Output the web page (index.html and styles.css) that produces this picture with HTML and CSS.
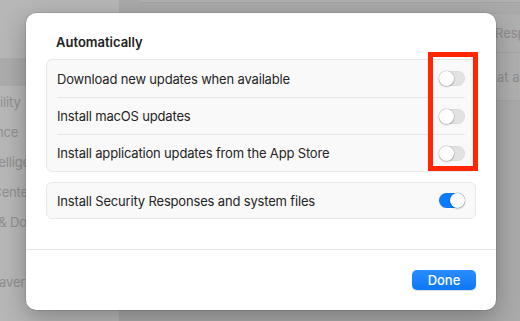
FILE: index.html
```html
<!DOCTYPE html>
<html>
  <head>
    <link rel="stylesheet" href="styles.css">
  </head>
  <body>
    <div class="window">
      <aside class="sidebar">
        <div class="side-item selected">General</div>
        <div class="side-item">Accessibility</div>
        <div class="side-item">Appearance</div>
        <div class="side-item">Apple Intelligence &amp; Siri</div>
        <div class="side-item">Control Center</div>
        <div class="side-item">Desktop &amp; Dock</div>
        <div class="side-item">Displays</div>
        <div class="side-item">Screen Saver</div>
      </aside>
      <main class="content">
        <div class="pane-top"></div>
        <div class="pane-group">
          <div class="pane-row"><span class="pane-text">Responses and system files</span></div>
          <div class="pane-row tall"><span class="pane-text">at accompanied the software</span></div>
        </div>
      </main>
    </div>

    <div class="dialog">
      <div class="dialog-body">
        <h2 class="section-title">Automatically</h2>
        <div class="group">
          <div class="row">
            <span class="label">Download new updates when available</span>
            <span class="toggle"></span>
          </div>
          <div class="row">
            <span class="label">Install macOS updates</span>
            <span class="toggle"></span>
          </div>
          <div class="row">
            <span class="label">Install application updates from the App Store</span>
            <span class="toggle"></span>
          </div>
        </div>
        <div class="group single">
          <div class="row">
            <span class="label">Install Security Responses and system files</span>
            <span class="toggle on"></span>
          </div>
        </div>
      </div>
      <div class="dialog-footer">
        <button class="btn-done">Done</button>
      </div>
    </div>

    <div class="highlight"></div>
  </body>
</html>
```

FILE: styles.css
```css
*{
    margin:0;
    padding:0;
    box-sizing:border-box;
}
html, body{
    width:520px;
    height:321px;
    overflow:hidden;
}
body{
    font-family:Inter, "Liberation Sans", sans-serif;
    font-size:13px;
    color:#242424;
    background-color:#adadad;
}

/* dimmed window behind the sheet */
.window{
    display:flex;
    height:321px;
}
.sidebar{
    width:119px;
    flex-shrink:0;
    background-color:#b7b7b7;
    padding-top:58px;
    overflow:hidden;
}
.side-item{
    height:30px;
    line-height:28px;
    white-space:nowrap;
    overflow:hidden;
    text-indent:-55px;
    letter-spacing:-0.15px;
    color:#909090;
}
.side-item.selected{
    height:28px;
    margin-bottom:2px;
    background-color:#acacac;
}
.content{
    flex:1;
    padding-left:21px;
    overflow:hidden;
    background-color:#aaaaaa;
}
.pane-top{
    height:3px;
    background-color:#b0b0b0;
    border-bottom:1px solid #a3a3a3;
}
.pane-group{
    margin-top:10px;
    background-color:#afafaf;
    border-top:1px solid #a6a6a6;
    border-bottom:1px solid #a6a6a6;
}
.pane-row{
    height:38px;
    display:flex;
    align-items:center;
    white-space:nowrap;
    padding-left:355px;
}
.pane-row.tall{
    height:48px;
    padding-left:357px;
}
.pane-row + .pane-row{
    border-top:1px solid #a4a4a4;
}
.pane-text{
    color:#8d8d8d;
}

/* sheet */
.dialog{
    position:absolute;
    left:26px;
    top:13px;
    width:470px;
    height:297px;
    background-color:#fff;
    border-radius:10px;
    box-shadow:0 0 0 0.5px rgba(0,0,0,.18), 0 8px 26px rgba(0,0,0,.28);
    display:flex;
    flex-direction:column;
}
.dialog-body{
    flex:1;
    padding:21px 20px 0;
    border-bottom:1px solid #e6e6e6;
}
.section-title{
    font-size:13px;
    font-weight:600;
    line-height:16px;
    padding-left:10px;
    margin-bottom:9px;
    color:#222;
}
.group{
    background-color:#f9f9f9;
    border:1px solid #e8e8e8;
    border-radius:6px;
    padding:0 10px;
}
.group.single{
    margin-top:10px;
}
.row{
    height:37px;
    display:flex;
    align-items:center;
    justify-content:space-between;
}
.row + .row{
    border-top:1px solid #e6e6e6;
}
.group.single .row{
    height:35px;
}
.label{
    white-space:nowrap;
    letter-spacing:-0.17px;
}
.toggle{
    position:relative;
    width:26px;
    height:15px;
    border-radius:8px;
    background-color:#e2e2e2;
    box-shadow:inset 0 0 0 0.5px rgba(0,0,0,.06);
}
.toggle::after{
    content:"";
    position:absolute;
    left:0;
    top:0;
    width:15px;
    height:15px;
    border-radius:50%;
    background-color:#fff;
    box-shadow:0 0 0 0.5px rgba(0,0,0,.18), 0 1px 2px rgba(0,0,0,.18);
}
.toggle.on{
    background-color:#0a7bff;
}
.toggle.on::after{
    left:11px;
}
.dialog-footer{
    height:60px;
    display:flex;
    justify-content:flex-end;
    align-items:center;
    padding:0 20px;
}
.btn-done{
    width:64px;
    height:20px;
    border:none;
    border-radius:5px;
    background:linear-gradient(#2a8cff, #0b78f6);
    color:#fff;
    font-family:Inter, "Liberation Sans", sans-serif;
    font-size:13px;
    font-weight:500;
    box-shadow:0 0.5px 1px rgba(0,0,0,.15);
}

/* annotation box */
.highlight{
    position:absolute;
    left:428px;
    top:52px;
    width:50px;
    height:119px;
    border:5px solid #ff2600;
}
```
